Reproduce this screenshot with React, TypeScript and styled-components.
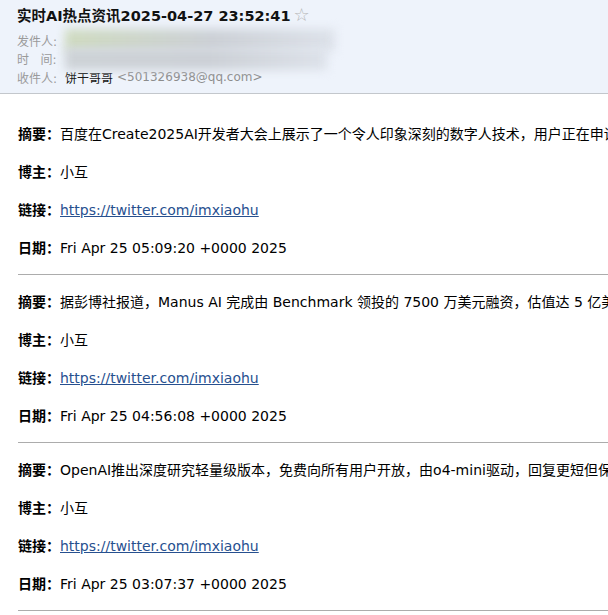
import styled, { createGlobalStyle } from "styled-components";

const GlobalStyle = createGlobalStyle`
  html, body {
    margin: 0;
    padding: 0;
    background: #fff;
  }
  body {
    font-family: "DejaVu Sans", "Noto Sans CJK SC", sans-serif;
    overflow: hidden;
  }
`

type Post = {
    summary: string;
    author: string;
    link: string;
    date: string;
};

const posts: Post[] = [
    {
        summary: "百度在Create2025AI开发者大会上展示了一个令人印象深刻的数字人技术，用户正在申请内测体验，效果非常逼真",
        author: "小互",
        link: "https://twitter.com/imxiaohu",
        date: "Fri Apr 25 05:09:20 +0000 2025",
    },
    {
        summary: "据彭博社报道，Manus AI 完成由 Benchmark 领投的 7500 万美元融资，估值达 5 亿美元",
        author: "小互",
        link: "https://twitter.com/imxiaohu",
        date: "Fri Apr 25 04:56:08 +0000 2025",
    },
    {
        summary: "OpenAI推出深度研究轻量级版本，免费向所有用户开放，由o4-mini驱动，回复更短但保持深度",
        author: "小互",
        link: "https://twitter.com/imxiaohu",
        date: "Fri Apr 25 03:07:37 +0000 2025",
    },
];

export default function App() {
    return (
        <>
            <GlobalStyle />
            <Page>
                <MailHeader>
                    <Title>
                        实时AI热点资讯2025-04-27 23:52:41
                        <Star>☆</Star>
                    </Title>
                    <MetaRow>
                        <MetaLabel>发件人:</MetaLabel>
                        <Blurred $width={270} $tone="#cfdbc0" />
                    </MetaRow>
                    <MetaRow>
                        <MetaLabel>时&nbsp;&nbsp;&nbsp;间:</MetaLabel>
                        <Blurred $width={262} $tone="#cdd2d6" />
                    </MetaRow>
                    <MetaRow>
                        <MetaLabel>收件人:</MetaLabel>
                        <Receiver>饼干哥哥</Receiver>
                        <Address>&lt;501326938@qq.com&gt;</Address>
                    </MetaRow>
                </MailHeader>
                <MailBody>
                    {posts.map((post, i) => (
                        <PostBlock key={i}>
                            <Field>
                                <FieldName>摘要：</FieldName>
                                {post.summary}
                            </Field>
                            <Field>
                                <FieldName>博主：</FieldName>
                                {post.author}
                            </Field>
                            <Field>
                                <FieldName>链接：</FieldName>
                                <Link href={post.link}>{post.link}</Link>
                            </Field>
                            <Field>
                                <FieldName>日期：</FieldName>
                                {post.date}
                            </Field>
                        </PostBlock>
                    ))}
                </MailBody>
            </Page>
        </>
    )
};

const Page = styled.div`
  width: 608px;
  overflow: hidden;
  color: #000;
`

const MailHeader = styled.div`
  background: #eef3fb;
  padding: 5px 17px 6px;
  border-bottom: 1px solid #c3c7cc;
`

const Title = styled.div`
  font-size: 14.5px;
  font-weight: bold;
  line-height: 20px;
  margin-bottom: 5px;
  white-space: nowrap;
  color: #111;
`

const Star = styled.span`
  font-weight: normal;
  font-size: 18px;
  color: #b5b5b5;
  margin-left: 3px;
`

const MetaRow = styled.div`
  display: flex;
  align-items: center;
  height: 18.5px;
  font-size: 12px;
  white-space: nowrap;
`

const MetaLabel = styled.span`
  color: #9a9a9a;
  width: 48px;
  flex: none;
`

const Blurred = styled.div<{ $width: number; $tone: string }>`
  width: ${p => p.$width}px;
  height: 22px;
  background: linear-gradient(90deg, ${p => p.$tone} 0%, #ccd0d6 55%, #dde2ea 100%);
  filter: blur(5px);
`

const Receiver = styled.span`
  color: #111;
  margin-right: 4px;
`

const Address = styled.span`
  color: #8c8c8c;
`

const MailBody = styled.div`
  padding: 13px 0 0 18px;
`

const PostBlock = styled.div`
  display: flex;
  flex-direction: column;
  gap: 14px;
  padding: 15px 0 14px;
  border-bottom: 1px solid #acacac;
`

const Field = styled.div`
  font-size: 14px;
  line-height: 24px;
  white-space: nowrap;
`

const FieldName = styled.b`
  font-weight: bold;
`

const Link = styled.a`
  color: #27508f;
  text-decoration: underline;
`
